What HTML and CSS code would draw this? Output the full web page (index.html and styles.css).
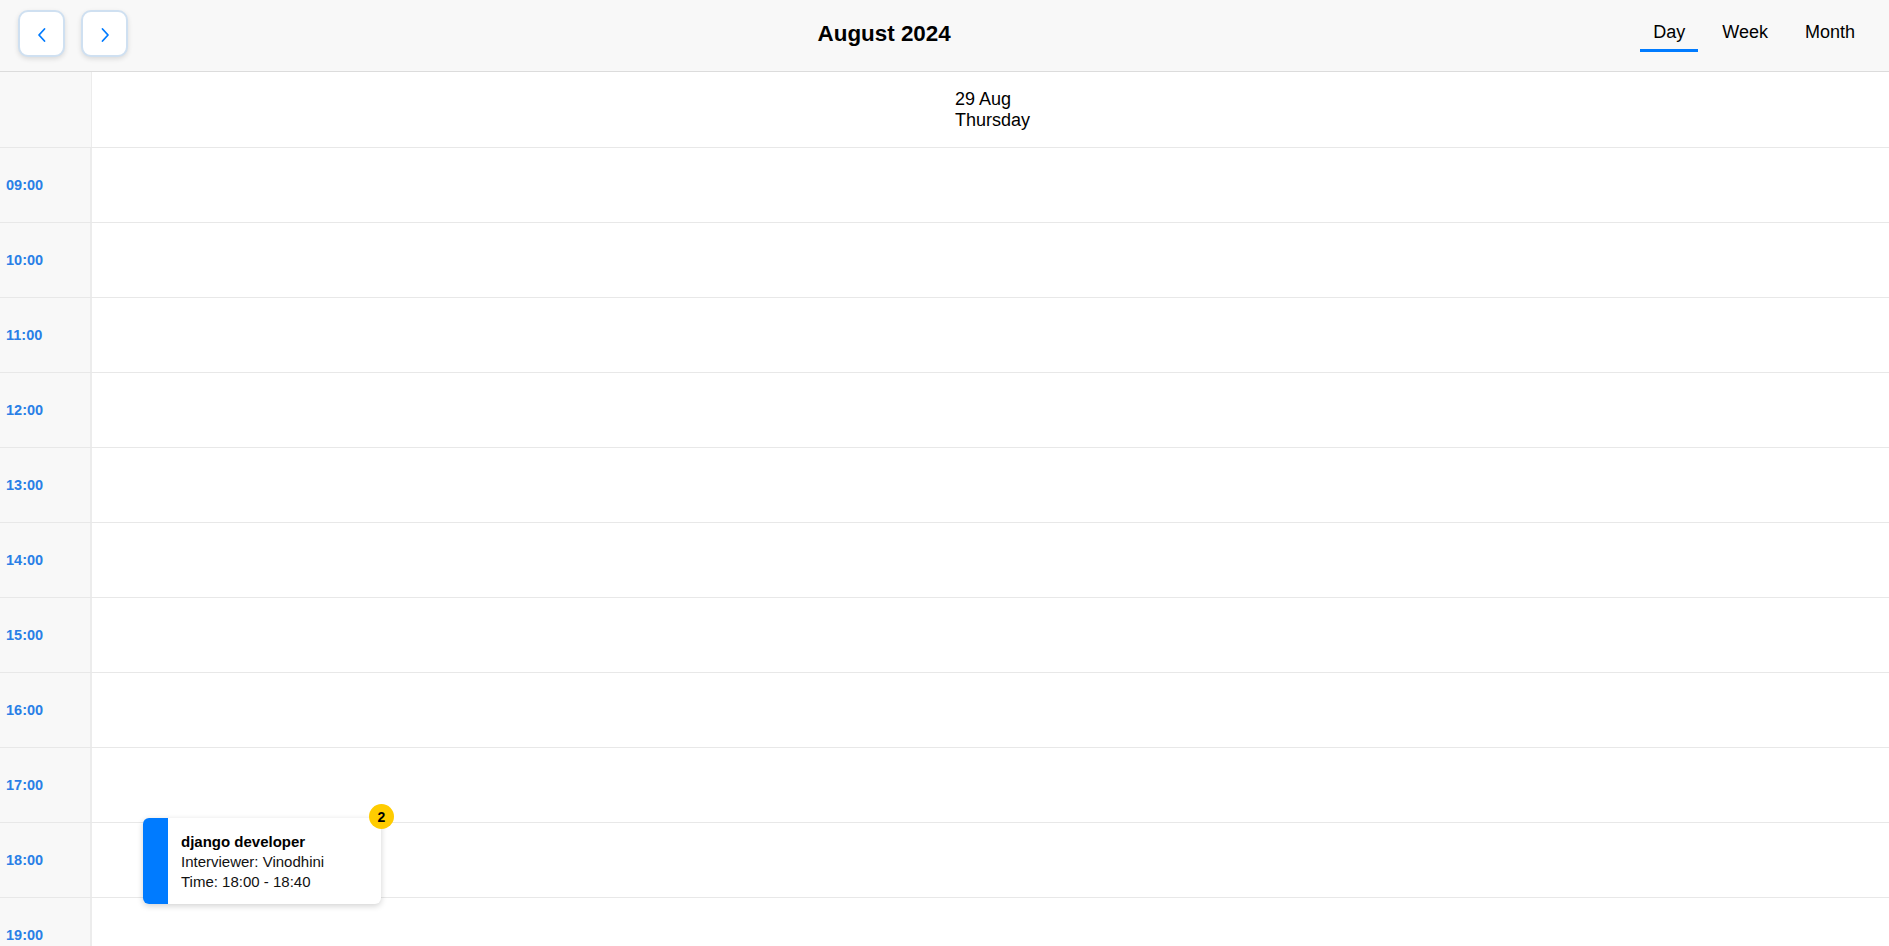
FILE: index.html
```
<!DOCTYPE html>
<html lang="en">
<head>
<meta charset="utf-8">
<title>Calendar</title>
<link rel="stylesheet" href="styles.css">
</head>
<body>
<header class="topbar">
  <div class="nav">
    <button class="nav-btn" aria-label="Previous">
      <svg width="14" height="16" viewBox="0 0 14 16"><path d="M9.5 2 L4 8 L9.5 14" fill="none" stroke="#007bff" stroke-width="1.8" stroke-linecap="round" stroke-linejoin="round"/></svg>
    </button>
    <button class="nav-btn" aria-label="Next">
      <svg width="14" height="16" viewBox="0 0 14 16"><path d="M4.5 2 L10 8 L4.5 14" fill="none" stroke="#007bff" stroke-width="1.8" stroke-linecap="round" stroke-linejoin="round"/></svg>
    </button>
  </div>
  <h1 class="title">August 2024</h1>
  <nav class="tabs">
    <button class="tab active">Day</button>
    <button class="tab">Week</button>
    <button class="tab">Month</button>
  </nav>
</header>

<div class="day-head">
  <div class="corner"></div>
  <div class="day-label"><div class="day-text">29 Aug<br>Thursday</div></div>
</div>

<div class="rows">
  <div class="row"><div class="time">09:00</div><div class="slot"></div></div>
  <div class="row"><div class="time">10:00</div><div class="slot"></div></div>
  <div class="row"><div class="time">11:00</div><div class="slot"></div></div>
  <div class="row"><div class="time">12:00</div><div class="slot"></div></div>
  <div class="row"><div class="time">13:00</div><div class="slot"></div></div>
  <div class="row"><div class="time">14:00</div><div class="slot"></div></div>
  <div class="row"><div class="time">15:00</div><div class="slot"></div></div>
  <div class="row"><div class="time">16:00</div><div class="slot"></div></div>
  <div class="row"><div class="time">17:00</div><div class="slot"></div></div>
  <div class="row"><div class="time">18:00</div>
    <div class="slot">
      <div class="event">
        <div class="event-bar"></div>
        <div class="event-body">
          <div class="event-title">django developer</div>
          <div>Interviewer: Vinodhini</div>
          <div>Time: 18:00 - 18:40</div>
        </div>
        <span class="badge">2</span>
      </div>
    </div>
  </div>
  <div class="row"><div class="time">19:00</div><div class="slot"></div></div>
  <div class="row"><div class="time">20:00</div><div class="slot"></div></div>
</div>
</body>
</html>
```

FILE: styles.css
```
* { box-sizing: border-box; }
html, body { margin: 0; padding: 0; }
body {
  font-family: "Liberation Sans", Arial, sans-serif;
  color: #000;
  background: #fff;
}

.topbar {
  display: flex;
  justify-content: space-between;
  align-items: flex-start;
  height: 72px;
  padding: 10px 21px 0 18px;
  background: #f8f8f8;
  border-bottom: 1px solid #dcdcdc;
}
.nav { display: flex; gap: 16px; }
.nav-btn {
  width: 47px;
  height: 47px;
  padding: 0;
  display: flex;
  align-items: center;
  justify-content: center;
  background: #fff;
  border: 2px solid #cfe0f1;
  border-radius: 10px;
  box-shadow: 0 2px 5px rgba(0, 0, 0, 0.12);
  cursor: pointer;
}
.nav-btn svg { display: block; margin-top: 2px; }

.title {
  margin: 0;
  font-size: 22.4px;
  font-weight: bold;
  line-height: 47px;
}

.tabs { display: flex; gap: 11px; margin-top: 5px; }
.tab {
  font-family: "Liberation Sans", Arial, sans-serif;
  font-size: 18px;
  line-height: 21px;
  color: #000;
  background: none;
  border: none;
  border-bottom: 3px solid transparent;
  padding: 7px 13px 6px;
  cursor: pointer;
}
.tab.active { border-bottom-color: #007bff; }

.day-head {
  display: grid;
  grid-template-columns: 92px 1fr;
  height: 76px;
  border-bottom: 1px solid #e8e8e8;
}
.corner {
  background: #f8f8f8;
  border-right: 1px solid #ececec;
}
.day-label {
  display: flex;
  align-items: center;
  justify-content: center;
  padding-left: 4px;
  font-size: 18px;
}
.day-text { text-align: left; }

.row {
  display: grid;
  grid-template-columns: 92px 1fr;
  height: 75px;
  border-bottom: 1px solid #e8e8e8;
}
.time {
  display: flex;
  align-items: center;
  padding-left: 6px;
  background: #f8f8f8;
  border-right: 2px solid #ececec;
  color: #2a7fe6;
  font-weight: bold;
  font-size: 14.5px;
}
.slot { position: relative; }

.event {
  position: absolute;
  left: 51px;
  top: -5px;
  width: 238px;
  height: 86px;
  display: flex;
  background: #fff;
  border-radius: 6px;
  box-shadow: 0 2px 6px rgba(0, 0, 0, 0.18);
  z-index: 2;
}
.event-bar {
  width: 25px;
  flex: none;
  background: #007bff;
  border-radius: 6px 0 0 6px;
}
.event-body {
  padding: 14px 13px 12px;
  font-size: 15px;
  line-height: 20px;
  color: #111;
}
.event-title { font-weight: bold; color: #000; }
.badge {
  position: absolute;
  top: -14px;
  right: -13px;
  width: 25px;
  height: 25px;
  border-radius: 50%;
  background: #ffcc00;
  display: flex;
  align-items: center;
  justify-content: center;
  font-size: 14px;
  font-weight: bold;
  color: #000;
}
```
